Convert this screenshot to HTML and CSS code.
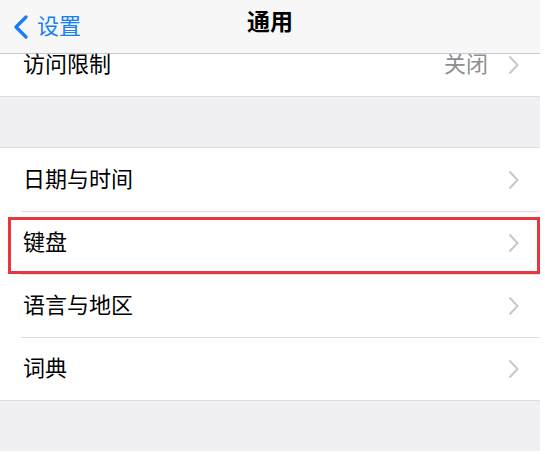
FILE: index.html
```html
<!DOCTYPE html>
<html lang="zh-CN">
<head>
    <meta charset="UTF-8">
    <meta name="viewport" content="width=device-width, initial-scale=1.0">
    <title>通用</title>
    <link rel="stylesheet" href="styles.css">
</head>
<body>
    <div class="screen">
        <div class="navbar">
            <a class="back" href="#">
                <svg class="back-icon" width="18" height="24" viewBox="0 0 18 24">
                    <polyline points="14,2 4,12 14,22" fill="none" stroke="#157efb" stroke-width="3.2" stroke-linecap="round" stroke-linejoin="round"/>
                </svg>
                <span class="back-text">设置</span>
            </a>
            <h1 class="title">通用</h1>
        </div>

        <div class="row row-cut">
            <span class="label">访问限制</span>
            <span class="value">关闭</span>
            <svg class="chevron" width="11" height="20" viewBox="0 0 11 20">
                <polyline points="1.5,1.5 9.5,10 1.5,18.5" fill="none" stroke="#c7c7cc" stroke-width="2"/>
            </svg>
        </div>

        <div class="gap"></div>

        <div class="group">
            <div class="row">
                <span class="label">日期与时间</span>
                <svg class="chevron" width="11" height="20" viewBox="0 0 11 20">
                    <polyline points="1.5,1.5 9.5,10 1.5,18.5" fill="none" stroke="#c7c7cc" stroke-width="2"/>
                </svg>
            </div>
            <div class="row highlighted">
                <span class="label">键盘</span>
                <svg class="chevron" width="11" height="20" viewBox="0 0 11 20">
                    <polyline points="1.5,1.5 9.5,10 1.5,18.5" fill="none" stroke="#c7c7cc" stroke-width="2"/>
                </svg>
            </div>
            <div class="row">
                <span class="label">语言与地区</span>
                <svg class="chevron" width="11" height="20" viewBox="0 0 11 20">
                    <polyline points="1.5,1.5 9.5,10 1.5,18.5" fill="none" stroke="#c7c7cc" stroke-width="2"/>
                </svg>
            </div>
            <div class="row">
                <span class="label">词典</span>
                <svg class="chevron" width="11" height="20" viewBox="0 0 11 20">
                    <polyline points="1.5,1.5 9.5,10 1.5,18.5" fill="none" stroke="#c7c7cc" stroke-width="2"/>
                </svg>
            </div>
        </div>

        <div class="gap gap-bottom"></div>
    </div>
</body>
</html>
```

FILE: styles.css
```css
* {
    margin: 0;
    padding: 0;
    box-sizing: border-box;
}

body {
    font-family: "Noto Sans CJK SC", "Noto Sans", sans-serif;
    background: #ffffff;
    color: #000000;
}

.screen {
    width: 540px;
}

.navbar {
    position: relative;
    height: 54px;
    background: #f7f7f7;
    border-bottom: 1px solid #c9c9cc;
    display: flex;
    align-items: center;
    justify-content: center;
}

.back {
    position: absolute;
    left: 12px;
    top: 14px;
    display: flex;
    align-items: center;
    gap: 7px;
    color: #157efb;
    text-decoration: none;
    font-size: 22px;
    line-height: 26px;
}

.back-text {
    position: relative;
    top: -3px;
}

.title {
    font-size: 23px;
    font-weight: bold;
    line-height: 28px;
    margin-top: -14px;
}

.row {
    position: relative;
    height: 63px;
    display: flex;
    align-items: center;
    padding: 0 21px 0 23px;
    background: #ffffff;
}

.row-cut {
    height: 42px;
    padding-bottom: 20px;
}

.label {
    flex: 1;
    font-size: 22px;
    line-height: 26px;
    position: relative;
    top: -3px;
}

.value {
    font-size: 22px;
    line-height: 26px;
    color: #8e8e93;
    margin-right: 20px;
    position: relative;
    top: -3px;
}

.chevron {
    display: block;
}

.gap {
    height: 52px;
    background: #efeff4;
    border-top: 1px solid #dcdce0;
    border-bottom: 1px solid #dcdce0;
}

.gap-bottom {
    border-bottom: none;
    height: 51px;
}

.group .row + .row::before {
    content: "";
    position: absolute;
    top: 0;
    left: 21px;
    right: 0;
    height: 1px;
    background: #dedee2;
}

.highlighted::after {
    content: "";
    position: absolute;
    top: 6px;
    left: 8px;
    right: 0;
    bottom: 0;
    border: 3px solid #e5373d;
}
```
